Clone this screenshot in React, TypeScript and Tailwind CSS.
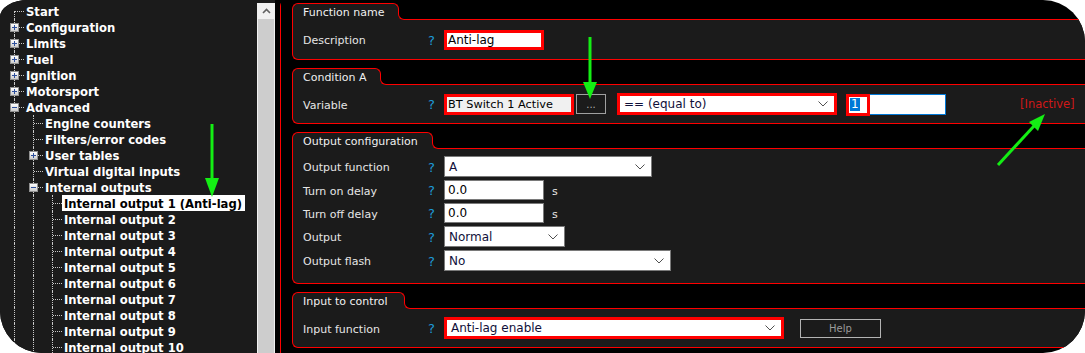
import React from 'react'

type TreeNode = { label: string; level: number; expander?: '+' | '-'; first?: boolean; selected?: boolean }

const tree: TreeNode[] = [
  { label: 'Start', level: 0, first: true },
  { label: 'Configuration', level: 0, expander: '+' },
  { label: 'Limits', level: 0, expander: '+' },
  { label: 'Fuel', level: 0, expander: '+' },
  { label: 'Ignition', level: 0, expander: '+' },
  { label: 'Motorsport', level: 0, expander: '+' },
  { label: 'Advanced', level: 0, expander: '-' },
  { label: 'Engine counters', level: 1 },
  { label: 'Filters/error codes', level: 1 },
  { label: 'User tables', level: 1, expander: '+' },
  { label: 'Virtual digital inputs', level: 1 },
  { label: 'Internal outputs', level: 1, expander: '-' },
  { label: 'Internal output 1 (Anti-lag)', level: 2, selected: true },
  ...Array.from({ length: 9 }, (_, i) => ({ label: `Internal output ${i + 2}`, level: 2 })),
]

function Expander({ sign }: { sign: '+' | '-' }) {
  return (
    <div className="absolute left-[5px] top-[4px] w-[9px] h-[9px] border border-[#919191] bg-linear-to-b from-white to-[#cdcdcd] flex items-center justify-center">
      <svg width="7" height="7" viewBox="0 0 7 7">
        <rect x="1" y="3" width="5" height="1" fill="#2d4f9c" />
        {sign === '+' && <rect x="3" y="1" width="1" height="5" fill="#2d4f9c" />}
      </svg>
    </div>
  )
}

function TreeRow({ node }: { node: TreeNode }) {
  const guides = []
  for (let i = 0; i < node.level; i++) {
    guides.push(
      <div key={i} className="w-[19px] h-full shrink-0">
        <div className="ml-[9px] h-full border-l border-dotted border-[#c8c8c8]" />
      </div>
    )
  }
  return (
    <div className="flex h-[16px] items-center">
      {guides}
      <div className="relative w-[19px] h-full shrink-0">
        <div className={node.first ? 'absolute left-[9px] top-[8px] bottom-0 border-l border-dotted border-[#c8c8c8]' : 'absolute left-[9px] top-0 bottom-0 border-l border-dotted border-[#c8c8c8]'} />
        <div className="absolute left-[10px] right-0 top-[8px] border-t border-dotted border-[#c8c8c8]" />
        {node.expander && <Expander sign={node.expander} />}
      </div>
      <span
        className={
          node.selected
            ? 'pl-[2px] pr-[3px] h-[16px] leading-[18px] whitespace-nowrap bg-white text-black'
            : 'pl-[2px] pr-[3px] h-[16px] leading-[18px] whitespace-nowrap text-white'
        }
      >
        {node.label}
      </span>
    </div>
  )
}

function LeftPanel() {
  return (
    <div className="w-[281px] shrink-0 flex flex-col border-r border-[#ff0000] rounded-tr-[6px]">
      <div className="h-px flex">
        <div className="w-[92px] bg-[#1b1b1b]" />
        <div className="flex-1 bg-[#ff0000]" />
      </div>
      <div className="flex-1 flex">
        <div className="w-[257px] bg-[#1b1b1b] pt-[3px] pl-[5px] font-['DejaVu_Sans',sans-serif] font-bold text-[11.6px]">
          {tree.map((n) => (
            <TreeRow key={n.label} node={n} />
          ))}
        </div>
        <div className="w-[18px] bg-[#1b1b1b] pt-[3px] flex flex-col">
          <div className="h-[16px] bg-[#f0f0f0] flex items-center justify-center">
            <svg width="9" height="6" viewBox="0 0 9 6">
              <polyline points="1,5 4.5,1.5 8,5" fill="none" stroke="#606060" strokeWidth="1.6" />
            </svg>
          </div>
          <div className="flex-1 bg-[#cdcdcd] border-x border-[#f0f0f0]" />
        </div>
        <div className="flex-1 bg-black" />
      </div>
    </div>
  )
}

function Group({ title, tabW, bodyH, children }: { title: string; tabW: string; bodyH: string; children: React.ReactNode }) {
  return (
    <div className="flex flex-col">
      <div className="flex h-[17px]">
        <div className={`${tabW} border-l border-t border-[#ff0000] rounded-tl-[6px] bg-[#1b1b1b] pl-[10px] text-[#f0f0f0] leading-[17px] whitespace-nowrap`}>
          {title}
        </div>
        <div className="w-[6px] flex flex-col">
          <div className="h-[11px] border-t border-r border-[#ff0000] rounded-tr-[6px] bg-[#1b1b1b]" />
          <div className="flex-1 bg-[#1b1b1b]" />
        </div>
        <div className="w-[6px] -ml-px flex flex-col">
          <div className="h-[11px]" />
          <div className="flex-1 bg-[#1b1b1b]">
            <div className="h-full bg-black border-l border-b border-[#ff0000] rounded-bl-[6px]" />
          </div>
        </div>
        <div className="flex-1 border-b border-[#ff0000]" />
      </div>
      <div className={`${bodyH} border-l border-b border-[#ff0000] rounded-bl-[6px] bg-[#1b1b1b] pl-[10px]`}>{children}</div>
    </div>
  )
}

function Row({ label, children }: { label: string; children: React.ReactNode }) {
  return (
    <div className="flex items-center">
      <div className="w-[125px] text-[#e6e6e6] whitespace-nowrap translate-y-[2px]">{label}</div>
      <div className="w-[16px] text-[#1e9bd7] text-[13px] translate-y-[1px]">?</div>
      {children}
    </div>
  )
}

function Chevron() {
  return (
    <svg width="10" height="6" viewBox="0 0 10 6" className="shrink-0">
      <polyline points="0.5,0.5 5,5 9.5,0.5" fill="none" stroke="#505050" strokeWidth="1" />
    </svg>
  )
}

function Select({ value, className }: { value: string; className: string }) {
  return (
    <div className={`${className} bg-white flex items-center justify-between pl-[4px] pr-[6px] text-[12px] text-[#10103a] whitespace-nowrap`}>
      <span>{value}</span>
      <Chevron />
    </div>
  )
}

function RightPanel() {
  return (
    <div className="flex-1 -mr-[40px] flex flex-col gap-[8px] pl-[11px] pt-[3px] font-['DejaVu_Sans',sans-serif] text-[11px]">
      <Group title="Function name" tabW="w-[101px]" bodyH="h-[40px] flex items-center">
        <Row label="Description">
          <div className="w-[100px] h-[20px] border-[3px] border-[#ff0000] bg-white pl-[1px] text-[12px] leading-[14px] text-black">Anti-lag</div>
        </Row>
      </Group>

      <Group title="Condition A" tabW="w-[83px]" bodyH="h-[39px] flex items-center">
        <div className="flex items-center flex-1">
          <Row label="Variable">
            <div className="w-[130px] h-[21px] border-[3px] border-[#ff0000] bg-[#f0f0f0] pl-[1px] text-[11.3px] leading-[15px] text-black whitespace-nowrap">BT Switch 1 Active</div>
            <div className="ml-[2px] w-[30px] h-[20px] border border-[#a0a0a0] bg-[#1b1b1b] text-[#b0b0b0] text-[10px] flex items-end justify-center pb-[3px] leading-none">...</div>
            <Select value="== (equal to)" className="ml-[11px] w-[220px] h-[22px] border-[3px] border-[#ff0000] pl-[2px]" />
            <div className="relative ml-[9px] w-[100px] h-[21px] border border-[#0078d7] bg-white flex items-center pl-[3px] text-[12px]">
              <span className="bg-[#0078d7] text-white px-[1px] leading-[13px]">1</span>
              <div className="absolute -left-px -top-px w-[24px] h-[22px] border-[3px] border-[#ff0000]" />
            </div>
            <div className="ml-[74px] text-[#d01818] text-[11.5px] translate-y-[1px]">[Inactive]</div>
          </Row>
        </div>
      </Group>

      <Group title="Output configuration" tabW="w-[135px]" bodyH="h-[135px] pt-[7px] flex flex-col gap-[3px]">
        <Row label="Output function">
          <Select value="A" className="w-[208px] h-[21px] border border-[#7a7a7a]" />
        </Row>
        <Row label="Turn on delay">
          <div className="w-[100px] h-[20px] border border-[#7a7a7a] bg-white pl-[3px] text-[12px] leading-[18px] text-black">0.0</div>
          <span className="ml-[8px] text-[#e6e6e6] translate-y-[2px]">s</span>
        </Row>
        <Row label="Turn off delay">
          <div className="w-[100px] h-[20px] border border-[#7a7a7a] bg-white pl-[3px] text-[12px] leading-[18px] text-black">0.0</div>
          <span className="ml-[8px] text-[#e6e6e6] translate-y-[2px]">s</span>
        </Row>
        <Row label="Output">
          <Select value="Normal" className="w-[121px] h-[21px] border border-[#7a7a7a]" />
        </Row>
        <Row label="Output flash">
          <Select value="No" className="w-[227px] h-[21px] border border-[#7a7a7a]" />
        </Row>
      </Group>

      <Group title="Input to control" tabW="w-[107px]" bodyH="h-[39px] flex items-center">
        <Row label="Input function">
          <Select value="Anti-lag enable" className="w-[340px] h-[22px] border-[3px] border-[#ff0000] pl-[2px]" />
          <div className="ml-[16px] w-[81px] h-[19px] border border-[#b4b4b4] bg-[#1b1b1b] text-[#9a9a9a] text-[10px] flex items-center justify-center">Help</div>
        </Row>
      </Group>
    </div>
  )
}

function Arrows() {
  const g = '#14ee14'
  return (
    <svg className="absolute inset-0 pointer-events-none" width="1085" height="353" viewBox="0 0 1085 353">
      <line x1="212" y1="124" x2="212" y2="182" stroke={g} strokeWidth="3" />
      <polygon points="205,178 219,178 212,197" fill={g} />
      <line x1="590" y1="37" x2="590" y2="86" stroke={g} strokeWidth="3" />
      <polygon points="583,82 597,82 590,99" fill={g} />
      <line x1="998" y1="165" x2="1034" y2="126" stroke={g} strokeWidth="3" />
      <polygon points="1045,114 1038,131 1029,122" fill={g} />
    </svg>
  )
}

export default function App() {
  return (
    <div className="relative w-[1085px] h-[353px] bg-white overflow-hidden">
      <div className="flex h-full bg-black rounded-tl-[28px_17px] rounded-tr-[42px] rounded-bl-[42px] rounded-br-[42px] overflow-hidden">
        <LeftPanel />
        <RightPanel />
      </div>
      <Arrows />
    </div>
  )
}
